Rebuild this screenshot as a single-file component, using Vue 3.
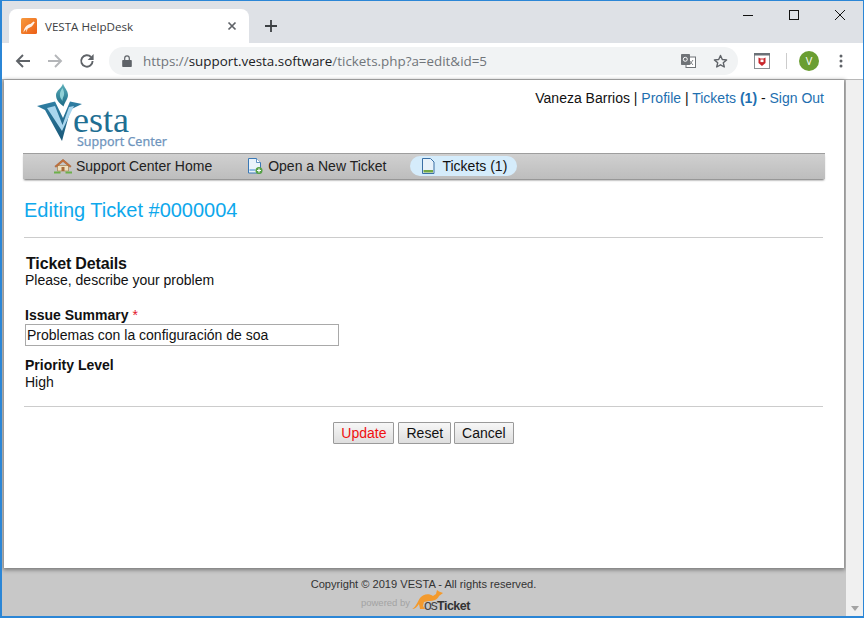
<script setup>
const navItems = [
  { label: 'Support Center Home', icon: 'home', active: false },
  { label: 'Open a New Ticket', icon: 'new', active: false },
  { label: 'Tickets (1)', icon: 'tickets', active: true }
]
</script>

<template>
  <div class="window">
    <div class="tabstrip">
      <div class="tab">
        <svg class="favicon" width="16" height="16" viewBox="0 0 16 16">
          <defs><linearGradient id="fav" x1="0" y1="0" x2="1" y2="1"><stop offset="0" stop-color="#f79a3e"/><stop offset="1" stop-color="#ec5f16"/></linearGradient></defs>
          <rect width="16" height="16" rx="1.500" fill="url(#fav)"/>
          <path d="M2.500 14.500C3 10 5.500 6.500 9.500 6l3-2.500 1.300.8L12 7C10.500 9.500 8 9.500 6.800 10.500L5 14.500l.3-3.500c-1 .8-2 2-2.800 3.500z" fill="#fff" opacity=".9"/>
        </svg>
        <span class="tab-title">VESTA HelpDesk</span>
        <svg class="tab-close" width="10" height="10" viewBox="0 0 10 10"><path d="M1.500 1.500 8.500 8.500M8.500 1.500 1.500 8.500" stroke="#5f6368" stroke-width="1.700"/></svg>
      </div>
      <svg class="new-tab" width="14" height="14" viewBox="0 0 14 14"><path d="M7 1v12M1 7h12" stroke="#3c4043" stroke-width="1.800"/></svg>
      <div class="win-controls">
        <svg width="12" height="12" viewBox="0 0 12 12"><path d="M1 6.500h10" stroke="#111" stroke-width="1"/></svg>
        <svg width="12" height="12" viewBox="0 0 12 12"><rect x="1.500" y="1.500" width="9" height="9" fill="none" stroke="#111" stroke-width="1"/></svg>
        <svg width="12" height="12" viewBox="0 0 12 12"><path d="M1 1l10 10M11 1 1 11" stroke="#111" stroke-width="1"/></svg>
      </div>
    </div>

    <div class="toolbar">
      <svg class="tool first" width="16" height="16" viewBox="0 0 16 16"><path d="M15 8H2.500M8 2 2 8l6 6" fill="none" stroke="#5f6368" stroke-width="1.900"/></svg>
      <svg class="tool" width="16" height="16" viewBox="0 0 16 16"><path d="M1 8h12.500M8 2l6 6-6 6" fill="none" stroke="#b4b6b9" stroke-width="1.900"/></svg>
      <svg class="tool" width="16" height="16" viewBox="0 0 16 16"><path d="M13.600 8a5.700 5.700 0 1 1-1.600-4" fill="none" stroke="#5f6368" stroke-width="1.900"/><path d="M14.600 1v6h-6z" fill="#5f6368"/></svg>
      <div class="omnibox">
        <svg class="lock" width="10" height="12" viewBox="0 0 10 12"><path d="M1 5h8a.8.8 0 0 1 .8.8v5.400a.8.8 0 0 1-.8.8H1a.8.8 0 0 1-.8-.8V5.800A.8.8 0 0 1 1 5z" fill="#5f6368"/><path d="M2.700 5V3.200a2.300 2.300 0 0 1 4.600 0V5" fill="none" stroke="#5f6368" stroke-width="1.200"/></svg>
        <span class="url"><span class="dim">https://</span>support.vesta.software<span class="dim">/tickets.php?a=edit&amp;id=5</span></span>
        <svg class="translate" width="15" height="14" viewBox="0 0 15 14"><rect x="5" y="3" width="9.500" height="10.500" fill="#fff" stroke="#6f7377"/><path d="M8 6l4 5M12 6l-3.500 5" stroke="#6f7377" stroke-width=".9"/><rect x="0" y="0" width="9" height="11" rx=".8" fill="#6f7377"/><circle cx="4.300" cy="5.300" r="2" fill="none" stroke="#fff"/></svg>
        <svg class="star" width="15" height="15" viewBox="0 0 15 15"><path d="M7.500 1.500l1.800 4 4.300.4-3.300 2.900 1 4.200-3.800-2.200-3.800 2.200 1-4.200L1.400 5.900l4.300-.4z" fill="none" stroke="#5f6368" stroke-width="1.400" stroke-linejoin="round"/></svg>
      </div>
      <svg class="ext" width="16" height="16" viewBox="0 0 16 16"><rect x=".5" y=".5" width="15" height="15" fill="#fff" stroke="#8a8f94"/><rect x="0" y="0" width="16" height="2.500" fill="#6b7177"/><path d="M4.500 4.500l2 1h3l2-1v5.500l-3.500 3-3.500-3z" fill="#c8262c"/><rect x="6.500" y="6.500" width="3" height="2.600" fill="#fff"/></svg>
      <span class="sep"></span>
      <span class="avatar">V</span>
      <svg class="menu" width="4" height="14" viewBox="0 0 4 14"><circle cx="2" cy="2" r="1.500" fill="#5f6368"/><circle cx="2" cy="7" r="1.500" fill="#5f6368"/><circle cx="2" cy="12" r="1.500" fill="#5f6368"/></svg>
    </div>

    <div class="page">
      <div class="viewport">
        <div class="container">
          <header class="head">
            <svg class="logo" width="134" height="68" viewBox="0 0 134 68">
              <defs>
                <linearGradient id="flame" x1="0" y1="0" x2="0" y2="1"><stop offset="0" stop-color="#5cb0ba"/><stop offset="1" stop-color="#1b6a86"/></linearGradient>
                <linearGradient id="vee" x1="0" y1="0" x2="0" y2="1"><stop offset="0" stop-color="#2f7fa4"/><stop offset="1" stop-color="#1a5878"/></linearGradient>
              </defs>
              <path d="M27 .5c1 4 5 7 5 11.500 0 4-3 6.500-4.500 11.500-3.500-3-7.500-6-7.500-11.500C20 7.500 26 5 27 .5z" fill="url(#flame)"/>
              <path d="M26.500 5c-2 3-3 5-2.500 8 .3 2 1.500 3.500 2.500 5-.2-2.500.8-4 1.500-6 .5-2.500-.5-5-1.500-7z" fill="#8fd0d6"/>
              <path d="M1 23l18-4.500L27 35l7-16.500L46 21 34.500 26.500 26 58 9 27z" fill="url(#vee)"/>
              <path d="M11 25l8-2 7.500 19L33 24l5-1-12 25z" fill="#a9d6ee"/>
              <text x="37" y="49" class="logo-word">esta</text>
              <text x="41" y="63" class="logo-sub">Support Center</text>
            </svg>
            <div class="userbar">
              Vaneza Barrios |
              <a>Profile</a> |
              <a>Tickets <b>(1)</b></a> -
              <a>Sign Out</a>
            </div>
          </header>

          <nav class="nav">
            <div v-for="item in navItems" :key="item.label" class="nav-item" :class="{ active: item.active }">
              <svg v-if="item.icon === 'home'" width="18" height="16" viewBox="0 0 18 16">
                <path d="M3.500 7.500h11V13h-11z" fill="#efe0c0" stroke="#a98a5c" stroke-width=".8"/>
                <path d="M.8 8.300 9 1.300l8.200 7-1.200 1L9 3.500 2 9.300z" fill="#c9733a" stroke="#96552a" stroke-width=".5"/>
                <rect x="7.500" y="9" width="3" height="4" fill="#a86c3a"/>
                <path d="M0 13.500h6.500V15.500H0zM11.500 13.500H18v2h-6.500z" fill="#6db04a"/>
              </svg>
              <svg v-else-if="item.icon === 'new'" width="16" height="16" viewBox="0 0 16 16">
                <path d="M1.500.5h8l4 4V15h-12z" fill="#eaf3fb" stroke="#3a78b5"/>
                <path d="M9.500.5v4h4" fill="#fff" stroke="#3a78b5" stroke-width=".8"/>
                <rect x="2.500" y="11" width="6" height="2" fill="#8fbbe3"/>
                <circle cx="12" cy="12.500" r="3.500" fill="#54a144"/>
                <path d="M12 10.500v4M10 12.500h4" stroke="#fff" stroke-width="1.200"/>
              </svg>
              <svg v-else width="16" height="16" viewBox="0 0 16 16">
                <path d="M2.500.5h8l3.500 3.500V15.500H2.500z" fill="#e8f2fa" stroke="#3a6fa5"/>
                <rect x="3.500" y="12" width="9.500" height="2.500" fill="#72a843"/>
              </svg>
              <span>{{ item.label }}</span>
            </div>
          </nav>

          <main class="content">
            <h1>Editing Ticket #0000004</h1>
            <hr class="rule first-rule">
            <h2>Ticket Details</h2>
            <p class="lead">Please, describe your problem</p>
            <label class="field-label">Issue Summary <span class="req">*</span></label>
            <input class="text-input" type="text" value="Problemas con la configuración de soa">
            <div class="field-label priority">Priority Level</div>
            <div class="value">High</div>
            <hr class="rule second-rule">
            <div class="buttons">
              <button class="btn update">Update</button>
              <button class="btn">Reset</button>
              <button class="btn cancel">Cancel</button>
            </div>
          </main>
        </div>

        <footer class="foot">
          <p>Copyright © 2019 VESTA - All rights reserved.</p>
          <div class="powered">
            <span>powered by</span>
            <svg width="60" height="23" viewBox="0 0 60 23">
              <path d="M0 20C3 19 5 14 8 9c3-4 9-5 13-2l3-2 1-4 2 1.500L31 4l-4 3c-1 3-5 5-10 5l-5 1-1 4 2 3H8l-1-5C5 18 3 20 0 20z" fill="#f39a2d"/>
              <text x="12" y="21" class="os">os</text>
              <text x="25" y="21" class="ticket">Ticket</text>
            </svg>
          </div>
        </footer>
      </div>
      <div class="scrollbar">
        <svg width="8" height="5" viewBox="0 0 8 5"><path d="M0 0h8L4 5z" fill="#a3a3a3"/></svg>
      </div>
    </div>
  </div>
</template>

<style>
html, body { margin: 0; padding: 0; overflow: hidden; }
</style>

<style scoped>
.window {
  width: 864px;
  height: 618px;
  box-sizing: border-box;
  border: 1px solid #2b86d6;
  border-left-width: 2px;
  border-bottom-width: 2px;
  display: flex;
  flex-direction: column;
  overflow: hidden;
  font-family: "Liberation Sans", Arial, sans-serif;
  background: #fff;
}
.tabstrip {
  height: 42px;
  flex: none;
  background: #dee1e6;
  display: flex;
  align-items: flex-end;
  padding-left: 7px;
  position: relative;
}
.tab {
  width: 240px;
  height: 34px;
  background: #fff;
  border-radius: 8px 8px 0 0;
  display: flex;
  align-items: center;
  box-sizing: border-box;
  padding: 0 12px;
}
.favicon { flex: none; }
.tab-title {
  margin-left: 8px;
  flex: 1;
  font: 11.6px "Open Sans", sans-serif;
  color: #3c4043;
}
.new-tab { margin: 0 0 10px 15px; }
.win-controls {
  position: absolute;
  right: 17px;
  top: 8px;
  display: flex;
  gap: 34px;
}
.toolbar {
  height: 37px;
  flex: none;
  box-sizing: border-box;
  border-bottom: 1px solid #b8b8b8;
  display: flex;
  align-items: center;
}
.tool { margin-left: 16px; flex: none; }
.tool.first { margin-left: 13px; }
.omnibox {
  margin-left: 14px;
  width: 629px;
  height: 28px;
  border-radius: 14px;
  background: #f1f3f4;
  display: flex;
  align-items: center;
  padding-left: 13px;
  box-sizing: border-box;
  flex: none;
}
.lock { flex: none; }
.url {
  margin-left: 11px;
  font: 13.4px "Open Sans", sans-serif;
  color: #202124;
  width: 538px;
  flex: none;
  white-space: nowrap;
}
.dim { color: #70757a; }
.translate { flex: none; }
.star { margin-left: 17px; flex: none; }
.ext { margin-left: 16px; flex: none; }
.sep { width: 1px; height: 16px; background: #ccc; margin-left: 16px; }
.avatar {
  margin-left: 12px;
  width: 20px;
  height: 20px;
  border-radius: 50%;
  background: #6a9e32;
  color: #fff;
  font: 11px/20px "Open Sans", sans-serif;
  text-align: center;
}
.menu { margin-left: 20px; }
.page {
  flex: 1;
  min-height: 0;
  display: flex;
}
.viewport {
  flex: 1;
  background: #c8c8c8;
  padding-left: 2px;
  min-width: 0;
}
.container {
  width: 840px;
  height: 488px;
  background: #fff;
  box-shadow: 0 1px 4px 1px rgba(0,0,0,.4);
  display: flex;
  flex-direction: column;
}
.head {
  height: 73px;
  flex: none;
  display: flex;
  justify-content: space-between;
  padding: 3px 20px 0 32px;
  box-sizing: border-box;
}
.logo-word { font: 36px "Liberation Serif", serif; fill: #1f6f93; }
.logo-sub { font: 12.5px "Noto Sans", sans-serif; fill: #6f95bd; stroke: #6f95bd; stroke-width: .25px; }
.userbar {
  font-size: 14px;
  color: #111;
  padding-top: 7px;
  white-space: nowrap;
}
.userbar a { color: #1e6fb0; }
.nav {
  margin-left: 19px;
  width: 802px;
  height: 26px;
  flex: none;
  box-sizing: border-box;
  background: linear-gradient(#d0d0d0, #bdbdbd);
  border-top: 1px solid #9e9e9e;
  box-shadow: 0 2px 2px -1px rgba(0,0,0,.6);
  display: flex;
  align-items: center;
  padding: 0 0 1px 31px;
  gap: 13px;
}
.nav-item {
  display: flex;
  align-items: center;
  gap: 4px;
  height: 20px;
  font-size: 14px;
  color: #222;
  padding: 0 10px 0 0;
}
.nav-item svg { flex: none; }
.nav-item:nth-child(2) { margin-left: 12px; padding-right: 11px; gap: 5px; }
.nav-item.active {
  background: #d5ecfb;
  border-radius: 10px;
  padding: 0 10px;
  gap: 6px;
  color: #111;
}
.content {
  padding: 0 20px;
  flex: 1;
  color: #111;
}
h1 {
  margin: 19px 0 0;
  font-size: 20px;
  font-weight: 400;
  line-height: 24px;
  color: #0ea8ec;
}
.rule {
  border: 0;
  height: 1px;
  background: #ccc;
  margin: 0;
  width: 799px;
}
.first-rule { margin-top: 15px; }
h2 {
  margin: 17px 0 0 2px;
  font-size: 16px;
  line-height: 17px;
  letter-spacing: -.15px;
}
.lead {
  margin: 0 0 0 1px;
  font-size: 14px;
  line-height: 17px;
}
.field-label {
  display: block;
  margin: 18px 0 0 1px;
  font-weight: 700;
  font-size: 14px;
  line-height: 17px;
}
.req { color: #e3172b; font-weight: 400; }
.text-input {
  display: block;
  margin: 0 0 0 1px;
  width: 314px;
  height: 22px;
  box-sizing: border-box;
  border: 1px solid #a9a9a9;
  padding: 0 1px;
  font: 14px "Liberation Sans", sans-serif;
  color: #111;
  background: #fff;
  outline: none;
}
.priority { margin-top: 11px; }
.value {
  margin-left: 1px;
  font-size: 14px;
  line-height: 17px;
}
.second-rule { margin-top: 15px; }
.buttons {
  margin-top: 15px;
  display: flex;
  justify-content: center;
  gap: 4px;
  padding-right: 1px;
}
.btn {
  height: 22px;
  padding: 0 7px;
  border: 1px solid #9a9a9a;
  border-radius: 1px;
  background: linear-gradient(#f7f7f7, #dedede);
  font: 14px "Liberation Sans", sans-serif;
  color: #111;
}
.cancel { margin-left: -1px; }
.update { color: #f01010; }
.foot {
  text-align: center;
  color: #333;
  font-size: 11.1px;
  padding-right: 3px;
}
.foot p { margin: 0; padding-top: 10px; line-height: 13px; }
.powered {
  display: flex;
  justify-content: center;
  align-items: flex-end;
  height: 23px;
  margin-top: -2px;
  padding-right: 14px;
  color: #a3a3a3;
  font-size: 9.5px;
  gap: 2px;
}
.powered span { padding-bottom: 4px; }
.os { font: 14px "Liberation Sans", sans-serif; fill: #444; letter-spacing: -1px; }
.ticket { font: 700 12.5px "Liberation Sans", sans-serif; fill: #333; letter-spacing: -.5px; }
.scrollbar {
  width: 17px;
  flex: none;
  background: #f0f0f0;
  display: flex;
  align-items: flex-end;
  justify-content: center;
  padding-bottom: 5px;
  box-sizing: border-box;
}
</style>
